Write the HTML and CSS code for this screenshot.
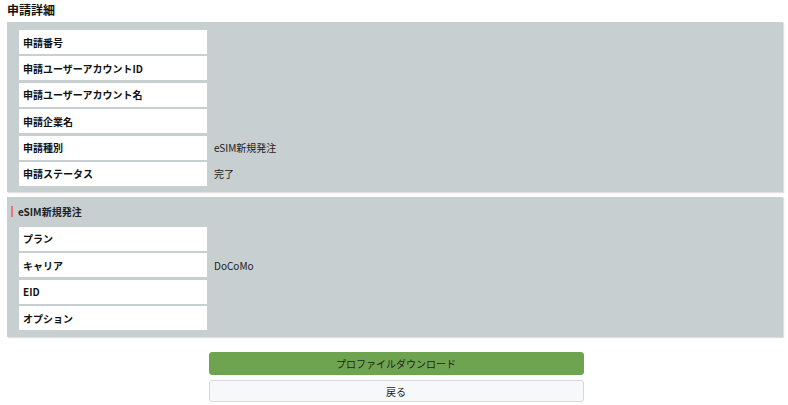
FILE: index.html
```html
<!DOCTYPE html>
<html lang="ja">
<head>
<meta charset="utf-8">
<title>申請詳細</title>
<link rel="stylesheet" href="styles.css">
</head>
<body>
<div class="page">
  <h1 class="title">申請詳細</h1>
  <section class="panel panel-main">
    <div class="grid">
      <div class="label">申請番号</div><div class="value"></div>
      <div class="label">申請ユーザーアカウントID</div><div class="value"></div>
      <div class="label">申請ユーザーアカウント名</div><div class="value"></div>
      <div class="label">申請企業名</div><div class="value"></div>
      <div class="label">申請種別</div><div class="value">eSIM新規発注</div>
      <div class="label">申請ステータス</div><div class="value">完了</div>
    </div>
  </section>
  <section class="panel panel-sub">
    <h2 class="sub-title">eSIM新規発注</h2>
    <div class="grid">
      <div class="label">プラン</div><div class="value"></div>
      <div class="label">キャリア</div><div class="value">DoCoMo</div>
      <div class="label">EID</div><div class="value"></div>
      <div class="label">オプション</div><div class="value"></div>
    </div>
  </section>
  <div class="actions">
    <button class="btn btn-primary">プロファイルダウンロード</button>
    <button class="btn btn-back">戻る</button>
  </div>
</div>
</body>
</html>
```

FILE: styles.css
```css
* { box-sizing: border-box; }
html, body {
  margin: 0;
  padding: 0;
  background: #ffffff;
  font-family: "Noto Sans CJK JP", "Noto Sans", "Liberation Sans", sans-serif;
  color: #222;
}
.page {
  padding: 0 5px 0 7px;
}
.title {
  margin: 0;
  height: 22px;
  padding-top: 2px;
  font-size: 12px;
  line-height: 16px;
  font-weight: 700;
  color: #111;
}
.panel {
  background: #c8cfd1;
  box-shadow: 1px 1px 1px rgba(0, 0, 0, 0.12);
}
.panel-main {
  padding: 8px 0 6px 12px;
}
.panel-sub {
  margin-top: 5px;
  padding: 0 0 7px 12px;
}
.sub-title {
  margin: 0 0 0 -8px;
  height: 30px;
  display: flex;
  align-items: center;
  font-size: 10px;
  font-weight: 700;
  color: #222;
}
.sub-title::before {
  content: "";
  display: inline-block;
  width: 2px;
  height: 11px;
  background: #e8737b;
  margin-right: 5px;
}
.grid {
  display: grid;
  grid-template-columns: 188px 1fr;
  grid-auto-rows: 24px;
  row-gap: 2.4px;
}
.label {
  background: #ffffff;
  padding-left: 4px;
  display: flex;
  align-items: center;
  font-size: 10px;
  font-weight: 700;
  color: #111;
}
.value {
  padding-left: 7px;
  display: flex;
  align-items: center;
  font-size: 10px;
  color: #222;
}
.actions {
  width: 375px;
  margin: 15px auto 0;
  display: flex;
  flex-direction: column;
  gap: 5px;
  position: relative;
  left: 1px;
}
.btn {
  font-family: "Noto Sans CJK JP", "Noto Sans", sans-serif;
  font-size: 10px;
  border-radius: 3px;
  cursor: pointer;
  color: #222;
}
.btn-primary {
  height: 23px;
  background: #6ea450;
  border: 1px solid #6ea450;
}
.btn-back {
  height: 22px;
  background: #f7f8f9;
  border: 1px solid #d6d9dc;
}
```
